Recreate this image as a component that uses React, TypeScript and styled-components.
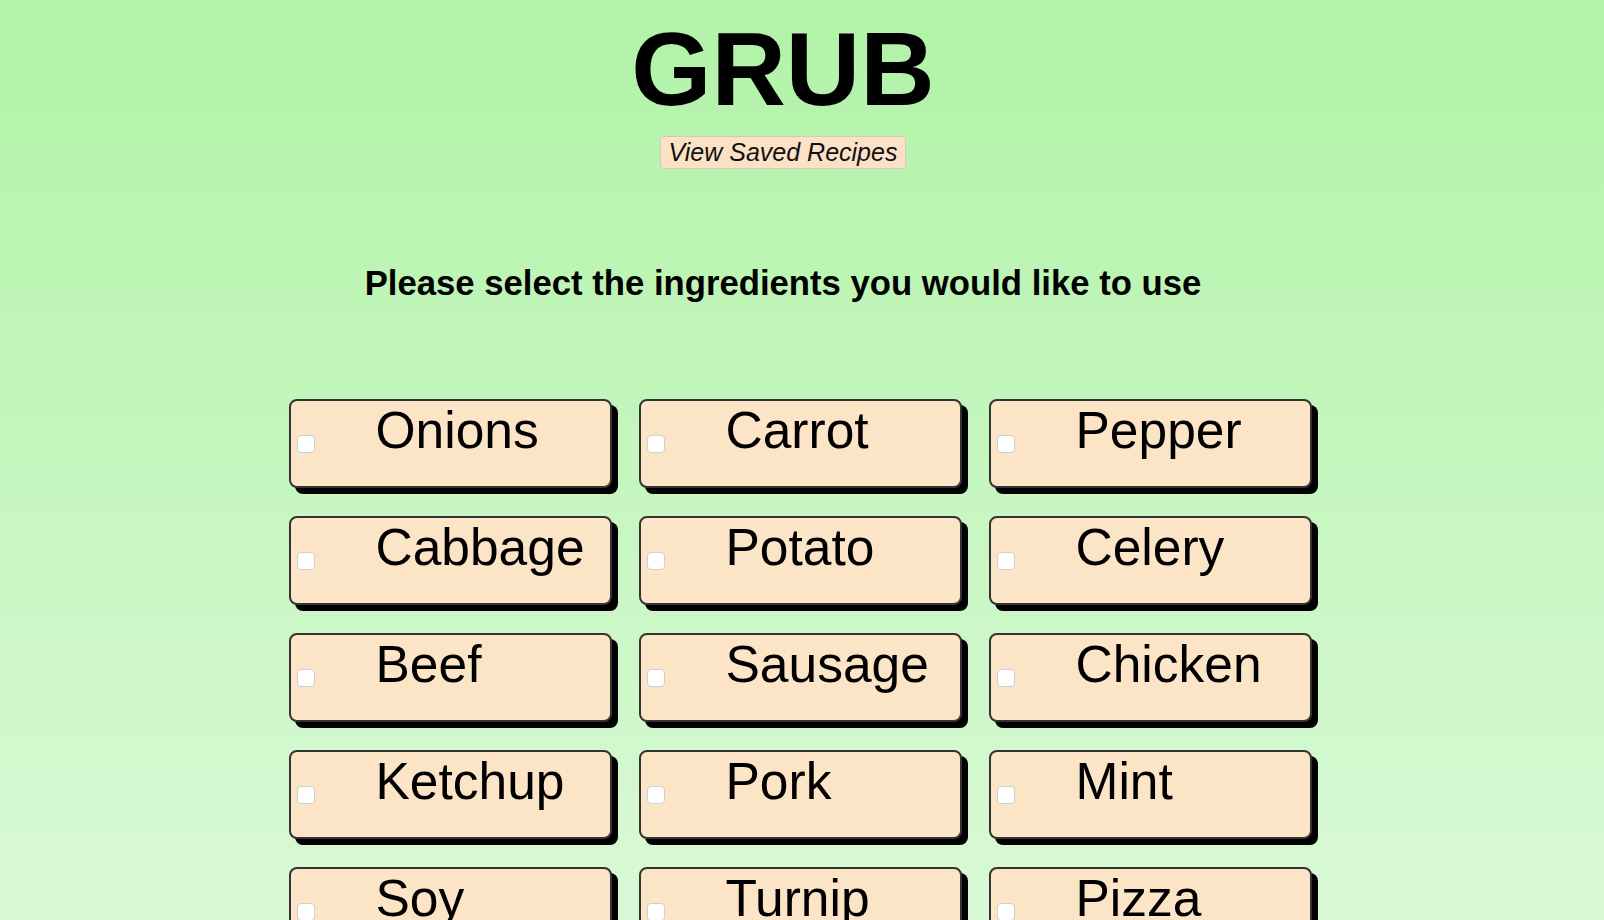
import styled, { createGlobalStyle } from 'styled-components';

const ingredients = [
  'Onions',
  'Carrot',
  'Pepper',
  'Cabbage',
  'Potato',
  'Celery',
  'Beef',
  'Sausage',
  'Chicken',
  'Ketchup',
  'Pork',
  'Mint',
  'Soy',
  'Turnip',
  'Pizza',
];

const GlobalStyle = createGlobalStyle`
  html, body {
    margin: 0;
    padding: 0;
  }
  body {
    font-family: 'Liberation Sans', Arial, Helvetica, sans-serif;
    color: #000;
  }
`;

export default function App() {
  return (
    <>
      <GlobalStyle />
      <Page>
        <Header>
          <Title>GRUB</Title>
          <SavedButton type="button">View Saved Recipes</SavedButton>
          <Prompt>Please select the ingredients you would like to use</Prompt>
        </Header>
        <IngredientGrid>
          {ingredients.map((name) => (
            <IngredientCard key={name}>
              <Checkbox type="checkbox" name={name} />
              <IngredientName>{name}</IngredientName>
            </IngredientCard>
          ))}
        </IngredientGrid>
      </Page>
    </>
  );
}

const Page = styled.div`
  height: 100vh;
  overflow: hidden;
  background: linear-gradient(180deg, #b1f3a7 0%, #d9f9d6 100%);
  display: flex;
  flex-direction: column;
  align-items: center;
`;

const Header = styled.header`
  display: flex;
  flex-direction: column;
  align-items: center;
  padding-right: 38px;
`;

const Title = styled.h1`
  margin: 18px 0 0;
  font-size: 103px;
  line-height: 103px;
  font-weight: 700;
`;

const SavedButton = styled.button`
  margin-top: 15px;
  padding: 0 8px;
  height: 33px;
  border: 1px solid #d6c9bb;
  border-radius: 4px;
  background: #fbe2c7;
  font-family: 'Liberation Sans', Arial, sans-serif;
  font-style: italic;
  font-size: 25px;
  line-height: 31px;
  color: #111;
  cursor: pointer;
`;

const Prompt = styled.h2`
  margin: 97px 0 0;
  font-size: 34.7px;
  line-height: 34px;
  font-weight: 700;
`;

const IngredientGrid = styled.div`
  margin-top: 99px;
  padding-right: 4px;
  display: grid;
  grid-template-columns: repeat(3, 323px);
  column-gap: 27px;
  row-gap: 28px;
`;

const IngredientCard = styled.label`
  box-sizing: border-box;
  height: 89px;
  display: flex;
  align-items: flex-start;
  padding: 1px 0 0 6px;
  border: 2px solid #333;
  border-radius: 8px;
  background: #fce4c7;
  box-shadow: 6px 6px 0 #000;
  cursor: pointer;
`;

const Checkbox = styled.input`
  appearance: none;
  flex: none;
  margin: 33px 0 0;
  width: 18px;
  height: 18px;
  border: 1px solid #cfcfcf;
  border-radius: 4px;
  background: #fff;

  &:checked {
    background: #2f7de1;
    border-color: #2f7de1;
  }
`;

const IngredientName = styled.span`
  margin-left: 61px;
  font-size: 51.5px;
  line-height: 56px;
  white-space: nowrap;
`;
